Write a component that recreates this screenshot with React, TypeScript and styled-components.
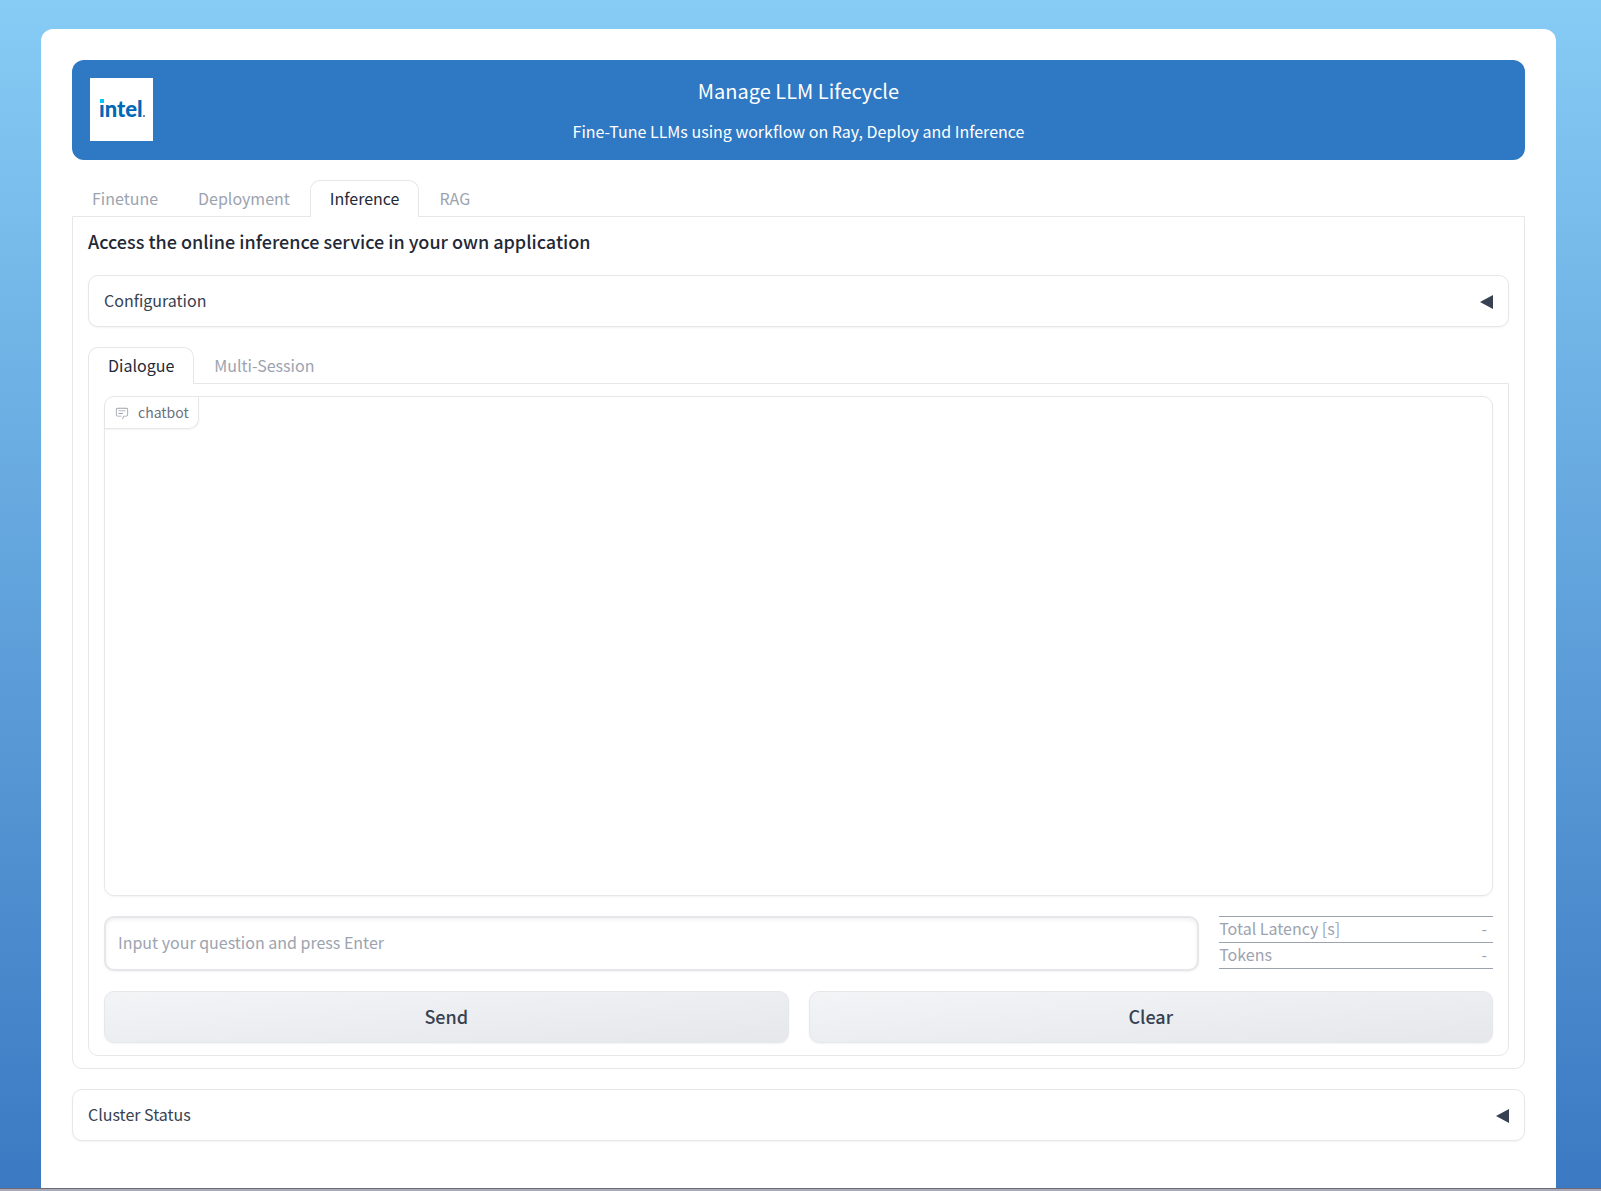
import React, { useState } from "react";
import styled, { createGlobalStyle } from "styled-components";

const GlobalStyle = createGlobalStyle`
  *, *::before, *::after { box-sizing: border-box; }
  body {
    margin: 0;
    background: #ffffff;
    color: #1f2937;
    font-family: "Noto Sans CJK SC", "Noto Sans", sans-serif;
    font-size: 16px;
    line-height: 26px;
  }
  button, input, table {
    font: inherit;
    color: inherit;
  }
`;

const Page = styled.div`
  display: flex;
  flex-direction: column;
  min-height: 100vh;
  padding: 29px 45px 0 41px;
  background: linear-gradient(to bottom, #86ccf5, #3b79c2);
  border-bottom: 2px solid #a9a9b8;
  box-shadow: inset 0 -1px 0 #6b6b78;
`;

const Card = styled.main`
  flex: 1;
  display: flex;
  flex-direction: column;
  gap: 20px;
  margin-bottom: 1px;
  padding: 31px 31px 40px;
  background: #ffffff;
  border-radius: 12px 12px 0 0;
`;

const Banner = styled.header`
  display: grid;
  grid-template-columns: 1fr auto 1fr;
  padding: 18px;
  border-radius: 12px;
  background: #2e78c4;
  color: #ffffff;
`;

const LogoTile = styled.svg`
  display: block;
  width: 63px;
  height: 63px;
  background: #ffffff;
`;

const BannerText = styled.div`
  display: flex;
  flex-direction: column;
  gap: 16px;
  text-align: center;
`;

const Title = styled.h1`
  margin: 0;
  font-size: 20px;
  line-height: 26px;
  font-weight: 400;
`;

const Subtitle = styled.p`
  margin: 0;
  line-height: 22px;
`;

const TabBar = styled.div`
  display: flex;
  position: relative;
  z-index: 1;
  margin-bottom: -1px;
`;

const Tab = styled.button<{ $active: boolean }>`
  height: 37px;
  padding: 0 19px 2px;
  border: 1px solid ${(p) => (p.$active ? "#e5e7eb" : "transparent")};
  border-bottom: 0;
  border-radius: 10px 10px 0 0;
  background: ${(p) => (p.$active ? "#ffffff" : "transparent")};
  color: ${(p) => (p.$active ? "#1f2937" : "#9ca3af")};
  cursor: pointer;
`;

const Panel = styled.div`
  display: flex;
  flex-direction: column;
  gap: 20px;
  padding: 12px 15px;
  border: 1px solid #e5e7eb;
  border-radius: 0 0 10px 10px;
`;

const Heading = styled.h2`
  margin: 0;
  padding-bottom: 2px;
  font-size: 18px;
  line-height: 24px;
  font-weight: 500;
`;

const AccordionBox = styled.section`
  border: 1px solid #e5e7eb;
  border-radius: 10px;
  background: #ffffff;
  box-shadow: 0 1px 2px rgba(0, 0, 0, 0.05);
`;

const AccordionButton = styled.button`
  display: flex;
  align-items: center;
  justify-content: space-between;
  width: 100%;
  height: 50px;
  padding: 2px 15px 0;
  border: 0;
  background: transparent;
  color: #374151;
  cursor: pointer;
`;

const AccordionTitle = styled.span`
  padding-bottom: 4px;
`;

const Caret = styled.svg<{ $open: boolean }>`
  width: 13px;
  height: 14px;
  transform: rotate(${(p) => (p.$open ? "-90deg" : "0deg")});
`;

const ChatArea = styled.section`
  height: 500px;
  border: 1px solid #e5e7eb;
  border-radius: 10px;
  box-shadow: 0 1px 2px rgba(0, 0, 0, 0.05);
`;

const ChatLabel = styled.div`
  display: inline-flex;
  align-items: center;
  gap: 9px;
  height: 32px;
  padding: 0 9px 0 10px;
  border: solid #e5e7eb;
  border-width: 0 1px 1px 0;
  border-radius: 9px 0 10px 0;
  box-shadow: 0 1px 2px rgba(0, 0, 0, 0.05);
  color: #6b7280;
  font-size: 14px;
  line-height: 20px;
`;

const ChatName = styled.span`
  padding-bottom: 2px;
`;

const ChatIcon = styled.svg`
  width: 14px;
  height: 14px;
  color: #9ca3af;
`;

const PromptRow = styled.div`
  display: grid;
  grid-template-columns: 4fr 1fr;
  align-items: start;
  gap: 20px;
`;

const PromptInput = styled.input`
  width: 100%;
  height: 55px;
  padding: 0 12px 3px;
  border: 2px solid #e5e7eb;
  border-radius: 10px;
  background: #ffffff;
  box-shadow: 0 1px 2px rgba(0, 0, 0, 0.05), inset 0 2px 4px rgba(0, 0, 0, 0.06);
  outline: none;
  &::placeholder { color: #9ca3af; opacity: 1; }
`;

const Stats = styled.table`
  width: 100%;
  border-collapse: collapse;
  color: #9ca3af;
  line-height: 23px;
`;

const StatRow = styled.tr`
  border-top: 1px solid #9ca3af;
  border-bottom: 1px solid #9ca3af;
`;

const StatName = styled.th`
  padding: 0 0 2px;
  font-weight: 400;
  text-align: left;
`;

const StatValue = styled.td`
  padding: 0 6px 2px 0;
  text-align: right;
`;

const ButtonRow = styled.div`
  display: grid;
  grid-template-columns: 1fr 1fr;
  gap: 20px;
`;

const ActionButton = styled.button`
  height: 52px;
  padding: 0 12px 2px;
  border: 1px solid #e5e7eb;
  border-radius: 10px;
  background: linear-gradient(to bottom right, #f3f4f6, #e5e7eb);
  box-shadow: 0 1px 2px rgba(0, 0, 0, 0.05);
  color: #374151;
  font-size: 18px;
  font-weight: 500;
  cursor: pointer;
`;

function IntelLogo() {
  return (
    <LogoTile viewBox="0 0 63 63" role="img" aria-label="Intel logo">
      <text x="9" y="39" fontFamily="Lato, sans-serif" fontWeight="900" fontSize="22" fill="#0068b5">
        intel
      </text>
      <rect x="8" y="19" width="7" height="7" fill="#ffffff" />
      <rect x="10" y="21" width="4" height="4" fill="#00c7fd" />
      <rect x="53" y="37" width="2" height="2" fill="#6f8fb5" />
    </LogoTile>
  );
}

function Tabs({ names, value, onChange }: { names: string[]; value: string; onChange: (name: string) => void }) {
  return (
    <TabBar role="tablist">
      {names.map((name) => (
        <Tab key={name} role="tab" aria-selected={name === value} $active={name === value} onClick={() => onChange(name)}>
          {name}
        </Tab>
      ))}
    </TabBar>
  );
}

function Accordion({ title }: { title: string }) {
  const [open, setOpen] = useState(false);
  return (
    <AccordionBox>
      <AccordionButton aria-expanded={open} onClick={() => setOpen(!open)}>
        <AccordionTitle>{title}</AccordionTitle>
        <Caret $open={open} viewBox="0 0 13 14" aria-hidden="true">
          <path d="M13 0v14L0 7z" fill="#374151" />
        </Caret>
      </AccordionButton>
    </AccordionBox>
  );
}

export default function App() {
  const [mainTab, setMainTab] = useState("Inference");
  const [chatTab, setChatTab] = useState("Dialogue");
  const [question, setQuestion] = useState("");

  return (
    <>
      <GlobalStyle />
      <Page>
        <Card>
          <Banner>
            <IntelLogo />
            <BannerText>
              <Title>Manage LLM Lifecycle</Title>
              <Subtitle>Fine-Tune LLMs using workflow on Ray, Deploy and Inference</Subtitle>
            </BannerText>
          </Banner>

          <div>
            <Tabs names={["Finetune", "Deployment", "Inference", "RAG"]} value={mainTab} onChange={setMainTab} />
            <Panel role="tabpanel">
              <Heading>Access the online inference service in your own application</Heading>
              <Accordion title="Configuration" />
              <div>
                <Tabs names={["Dialogue", "Multi-Session"]} value={chatTab} onChange={setChatTab} />
                <Panel role="tabpanel">
                  <ChatArea>
                    <ChatLabel>
                      <ChatIcon viewBox="0 0 32 32" fill="currentColor" aria-hidden="true">
                        <path d="M17.74 30L16 29l4-7h6a2 2 0 0 0 2-2V8a2 2 0 0 0-2-2H6a2 2 0 0 0-2 2v12a2 2 0 0 0 2 2h9v2H6a4 4 0 0 1-4-4V8a4 4 0 0 1 4-4h20a4 4 0 0 1 4 4v12a4 4 0 0 1-4 4h-4.84z" />
                        <path d="M8 10h16v2H8zM8 16h10v2H8z" />
                      </ChatIcon>
                      <ChatName>chatbot</ChatName>
                    </ChatLabel>
                  </ChatArea>
                  <PromptRow>
                    <PromptInput
                      type="text"
                      aria-label="Question"
                      placeholder="Input your question and press Enter"
                      value={question}
                      onChange={(e) => setQuestion(e.target.value)}
                    />
                    <Stats>
                      <tbody>
                        <StatRow>
                          <StatName scope="row">Total Latency [s]</StatName>
                          <StatValue>-</StatValue>
                        </StatRow>
                        <StatRow>
                          <StatName scope="row">Tokens</StatName>
                          <StatValue>-</StatValue>
                        </StatRow>
                      </tbody>
                    </Stats>
                  </PromptRow>
                  <ButtonRow>
                    <ActionButton>Send</ActionButton>
                    <ActionButton onClick={() => setQuestion("")}>Clear</ActionButton>
                  </ButtonRow>
                </Panel>
              </div>
            </Panel>
          </div>

          <Accordion title="Cluster Status" />
        </Card>
      </Page>
    </>
  );
}
